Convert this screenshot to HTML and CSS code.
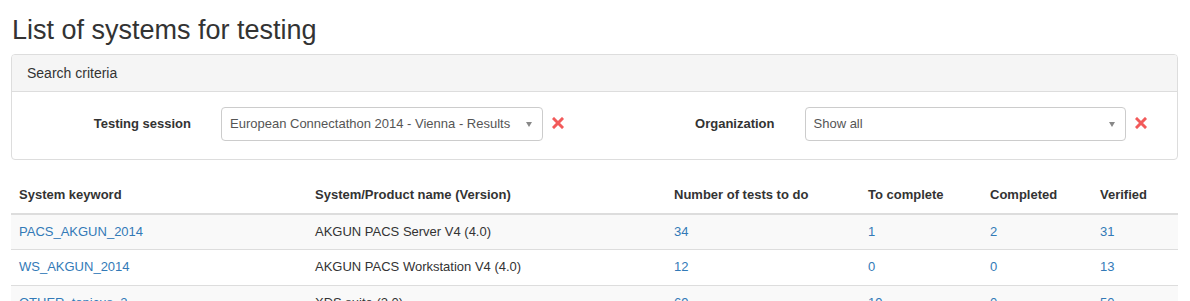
FILE: index.html
```html
<!DOCTYPE html>
<html lang="en">
<head>
    <meta charset="UTF-8">
    <title>List of systems for testing</title>
    <link rel="stylesheet" href="styles.css">
</head>
<body>

<div class="page">
    <h2>List of systems for testing</h2>

    <div class="panel">
        <div class="panel-heading">Search criteria</div>
        <div class="panel-body">
            <div class="form-group">
                <label>Testing session</label>
                <div class="select">
                    <span>European Connectathon 2014 - Vienna - Results</span>
                    <span class="caret"></span>
                </div>
                <svg class="reset" width="12" height="12" viewBox="0 0 12 12">
                    <path d="M2 2 L10 10 M10 2 L2 10" stroke="#f25a5a" stroke-width="3" stroke-linecap="square"/>
                </svg>
            </div>
            <div class="form-group">
                <label>Organization</label>
                <div class="select">
                    <span>Show all</span>
                    <span class="caret"></span>
                </div>
                <svg class="reset" width="12" height="12" viewBox="0 0 12 12">
                    <path d="M2 2 L10 10 M10 2 L2 10" stroke="#f25a5a" stroke-width="3" stroke-linecap="square"/>
                </svg>
            </div>
        </div>
    </div>

    <table class="systems">
        <colgroup>
            <col style="width: 296px">
            <col style="width: 359px">
            <col style="width: 194px">
            <col style="width: 122px">
            <col style="width: 110px">
            <col>
        </colgroup>
        <thead>
            <tr>
                <th>System keyword</th>
                <th>System/Product name (Version)</th>
                <th>Number of tests to do</th>
                <th>To complete</th>
                <th>Completed</th>
                <th>Verified</th>
            </tr>
        </thead>
        <tbody>
            <tr>
                <td><a href="#">PACS_AKGUN_2014</a></td>
                <td>AKGUN PACS Server V4 (4.0)</td>
                <td><a href="#">34</a></td>
                <td><a href="#">1</a></td>
                <td><a href="#">2</a></td>
                <td><a href="#">31</a></td>
            </tr>
            <tr>
                <td><a href="#">WS_AKGUN_2014</a></td>
                <td>AKGUN PACS Workstation V4 (4.0)</td>
                <td><a href="#">12</a></td>
                <td><a href="#">0</a></td>
                <td><a href="#">0</a></td>
                <td><a href="#">13</a></td>
            </tr>
            <tr>
                <td><a href="#">OTHER_topicus_2</a></td>
                <td>XDS suite (2.0)</td>
                <td><a href="#">69</a></td>
                <td><a href="#">19</a></td>
                <td><a href="#">0</a></td>
                <td><a href="#">50</a></td>
            </tr>
        </tbody>
    </table>
</div>

</body>
</html>
```

FILE: styles.css
```css
* {
    box-sizing: border-box;
    margin: 0;
    padding: 0;
}

body {
    font-family: 'Liberation Sans', Arial, sans-serif;
    font-size: 13px;
    line-height: 1.42857;
    color: #333;
    background: #fff;
}

.page {
    padding: 0 12px 0 11px;
}

h2 {
    font-size: 27px;
    font-weight: 400;
    line-height: 33px;
    margin: 14px 0 7px 1px;
    color: #333;
}

a {
    color: #337ab7;
    text-decoration: none;
}

.panel {
    border: 1px solid #ddd;
    border-radius: 4px;
    margin-bottom: 18px;
}

.panel-heading {
    background: #f5f5f5;
    border-bottom: 1px solid #ddd;
    border-radius: 3px 3px 0 0;
    padding: 0 15px;
    height: 37px;
    line-height: 36px;
    font-size: 14px;
}

.panel-body {
    display: flex;
    padding: 15px 0 18px;
}

.form-group {
    flex: 1;
    display: flex;
    align-items: center;
}

.form-group label {
    width: 179px;
    text-align: right;
    font-weight: 700;
    margin-right: 30px;
}

.form-group + .form-group label {
    width: 180px;
}

.select {
    width: 322px;
    height: 34px;
    border: 1px solid #ccc;
    border-radius: 4px;
    display: flex;
    align-items: center;
    justify-content: space-between;
    padding: 0 10px 0 8px;
    color: #555;
}

.form-group + .form-group .select {
    width: 321px;
}

.caret {
    width: 0;
    height: 0;
    border-left: 3.5px solid transparent;
    border-right: 3.5px solid transparent;
    border-top: 5px solid #888;
}

.reset {
    margin-left: 9px;
    margin-bottom: 2px;
}

.systems {
    width: 100%;
    border-collapse: collapse;
    table-layout: fixed;
}

.systems th,
.systems td {
    text-align: left;
    padding: 8px;
    border-top: 1px solid #ddd;
    vertical-align: top;
}

.systems th {
    border-top: none;
    border-bottom: 2px solid #ddd;
    font-weight: 700;
}

.systems tbody tr:nth-child(odd) {
    background: #f9f9f9;
}
```
